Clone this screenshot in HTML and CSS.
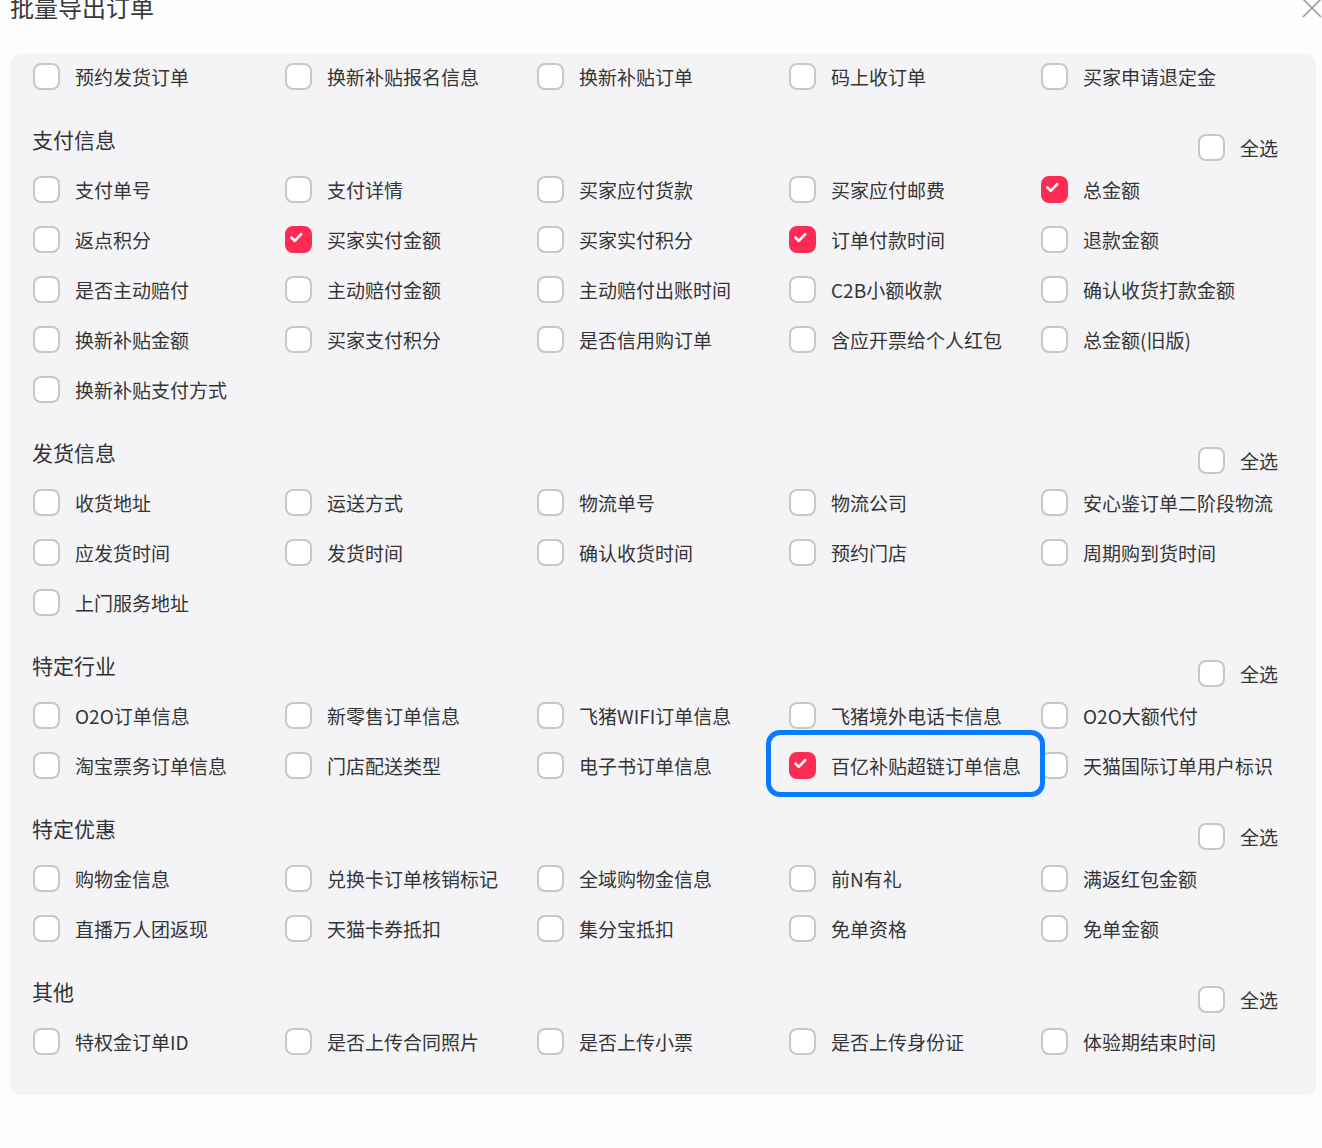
FILE: index.html
```html
<!DOCTYPE html>
<html lang="zh-CN">

<head>
  <meta charset="UTF-8">
  <meta name="viewport" content="width=device-width, initial-scale=1.0">
  <title>批量导出订单</title>
  <link rel="stylesheet" href="styles.css">
</head>

<body>
  <div class="dialog">
    <div class="dialog-head">
      <h2 class="dialog-title">批量导出订单</h2>
      <span class="close">
        <svg width="24" height="24" viewBox="0 0 24 24"><path d="M3 3 L21 21 M21 3 L3 21" stroke="#9a9a9f" stroke-width="1.6" fill="none"/></svg>
      </span>
    </div>

    <div class="panel">
      <div class="section section-cut">
        <div class="grid">
          <label class="item"><span class="box"></span>预约发货订单</label>
          <label class="item"><span class="box"></span>换新补贴报名信息</label>
          <label class="item"><span class="box"></span>换新补贴订单</label>
          <label class="item"><span class="box"></span>码上收订单</label>
          <label class="item"><span class="box"></span>买家申请退定金</label>
        </div>
      </div>

      <div class="section">
        <div class="section-head">
          <span class="section-title">支付信息</span>
          <label class="item all"><span class="box"></span>全选</label>
        </div>
        <div class="grid">
          <label class="item"><span class="box"></span>支付单号</label>
          <label class="item"><span class="box"></span>支付详情</label>
          <label class="item"><span class="box"></span>买家应付货款</label>
          <label class="item"><span class="box"></span>买家应付邮费</label>
          <label class="item"><span class="box on"></span>总金额</label>
          <label class="item"><span class="box"></span>返点积分</label>
          <label class="item"><span class="box on"></span>买家实付金额</label>
          <label class="item"><span class="box"></span>买家实付积分</label>
          <label class="item"><span class="box on"></span>订单付款时间</label>
          <label class="item"><span class="box"></span>退款金额</label>
          <label class="item"><span class="box"></span>是否主动赔付</label>
          <label class="item"><span class="box"></span>主动赔付金额</label>
          <label class="item"><span class="box"></span>主动赔付出账时间</label>
          <label class="item"><span class="box"></span>C2B小额收款</label>
          <label class="item"><span class="box"></span>确认收货打款金额</label>
          <label class="item"><span class="box"></span>换新补贴金额</label>
          <label class="item"><span class="box"></span>买家支付积分</label>
          <label class="item"><span class="box"></span>是否信用购订单</label>
          <label class="item"><span class="box"></span>含应开票给个人红包</label>
          <label class="item"><span class="box"></span>总金额(旧版)</label>
          <label class="item"><span class="box"></span>换新补贴支付方式</label>
        </div>
      </div>

      <div class="section">
        <div class="section-head">
          <span class="section-title">发货信息</span>
          <label class="item all"><span class="box"></span>全选</label>
        </div>
        <div class="grid">
          <label class="item"><span class="box"></span>收货地址</label>
          <label class="item"><span class="box"></span>运送方式</label>
          <label class="item"><span class="box"></span>物流单号</label>
          <label class="item"><span class="box"></span>物流公司</label>
          <label class="item"><span class="box"></span>安心鉴订单二阶段物流</label>
          <label class="item"><span class="box"></span>应发货时间</label>
          <label class="item"><span class="box"></span>发货时间</label>
          <label class="item"><span class="box"></span>确认收货时间</label>
          <label class="item"><span class="box"></span>预约门店</label>
          <label class="item"><span class="box"></span>周期购到货时间</label>
          <label class="item"><span class="box"></span>上门服务地址</label>
        </div>
      </div>

      <div class="section">
        <div class="section-head">
          <span class="section-title">特定行业</span>
          <label class="item all"><span class="box"></span>全选</label>
        </div>
        <div class="grid">
          <label class="item"><span class="box"></span>O2O订单信息</label>
          <label class="item"><span class="box"></span>新零售订单信息</label>
          <label class="item"><span class="box"></span>飞猪WIFI订单信息</label>
          <label class="item"><span class="box"></span>飞猪境外电话卡信息</label>
          <label class="item"><span class="box"></span>O2O大额代付</label>
          <label class="item"><span class="box"></span>淘宝票务订单信息</label>
          <label class="item"><span class="box"></span>门店配送类型</label>
          <label class="item"><span class="box"></span>电子书订单信息</label>
          <label class="item marked"><span class="box on"></span>百亿补贴超链订单信息<span class="mark"></span></label>
          <label class="item"><span class="box"></span>天猫国际订单用户标识</label>
        </div>
      </div>

      <div class="section">
        <div class="section-head">
          <span class="section-title">特定优惠</span>
          <label class="item all"><span class="box"></span>全选</label>
        </div>
        <div class="grid">
          <label class="item"><span class="box"></span>购物金信息</label>
          <label class="item"><span class="box"></span>兑换卡订单核销标记</label>
          <label class="item"><span class="box"></span>全域购物金信息</label>
          <label class="item"><span class="box"></span>前N有礼</label>
          <label class="item"><span class="box"></span>满返红包金额</label>
          <label class="item"><span class="box"></span>直播万人团返现</label>
          <label class="item"><span class="box"></span>天猫卡券抵扣</label>
          <label class="item"><span class="box"></span>集分宝抵扣</label>
          <label class="item"><span class="box"></span>免单资格</label>
          <label class="item"><span class="box"></span>免单金额</label>
        </div>
      </div>

      <div class="section">
        <div class="section-head">
          <span class="section-title">其他</span>
          <label class="item all"><span class="box"></span>全选</label>
        </div>
        <div class="grid">
          <label class="item"><span class="box"></span>特权金订单ID</label>
          <label class="item"><span class="box"></span>是否上传合同照片</label>
          <label class="item"><span class="box"></span>是否上传小票</label>
          <label class="item"><span class="box"></span>是否上传身份证</label>
          <label class="item"><span class="box"></span>体验期结束时间</label>
        </div>
      </div>
    </div>
  </div>
</body>

</html>
```

FILE: styles.css
```css
* {
  margin: 0px;
  padding: 0px;
  box-sizing: border-box;
}
body {
  background-color: #fdfdfd;
  font-family: "Noto Sans CJK SC", "Noto Sans", sans-serif;
  color: #333;
  overflow: hidden;
}
.dialog-head {
  display: flex;
  justify-content: space-between;
  align-items: flex-start;
  height: 54px;
  padding-left: 10px;
}
.dialog-title {
  font-size: 24px;
  font-weight: 400;
  line-height: 32px;
  margin-top: -9px;
  color: #3a3a3a;
}
.close {
  margin-top: -4px;
  margin-right: -2px;
}
.panel {
  background-color: #f4f4f7;
  margin: 0 6px 0 10px;
  padding: 0 23px 29px 23px;
  border-radius: 10px;
  overflow: hidden;
}
.section-cut {
  margin-top: -3px;
}
.section-head {
  display: flex;
  justify-content: space-between;
  align-items: flex-start;
  height: 63px;
}
.section-title {
  font-size: 21px;
  line-height: 24px;
  margin-top: 26px;
  margin-left: -1px;
}
.grid {
  display: grid;
  grid-template-columns: repeat(5, 252px);
  grid-auto-rows: 50px;
}
.item {
  display: flex;
  align-items: center;
  gap: 15px;
  font-size: 19px;
  color: #343434;
  white-space: nowrap;
}
.item.all {
  margin-top: 33px;
  margin-right: 15px;
  height: 27px;
}
.box {
  width: 27px;
  height: 27px;
  border: 2px solid #c6c6cd;
  border-radius: 8px;
  background-color: #fff;
  flex-shrink: 0;
}
.box.on {
  background-color: #fe2c55;
  border-color: #fe2c55;
  background-image: url("data:image/svg+xml;utf8,<svg xmlns='http://www.w3.org/2000/svg' viewBox='0 0 27 27'><path d='M7.5 13.5 L11.5 17.5 L19 9.5' stroke='white' stroke-width='3' fill='none' stroke-linecap='round' stroke-linejoin='round'/></svg>");
  background-position: -2px -2px;
}
.marked {
  position: relative;
}
.mark {
  position: absolute;
  left: -23px;
  top: -10px;
  width: 279px;
  height: 67px;
  border: 5px solid #0a7bff;
  border-radius: 14px;
}
```
